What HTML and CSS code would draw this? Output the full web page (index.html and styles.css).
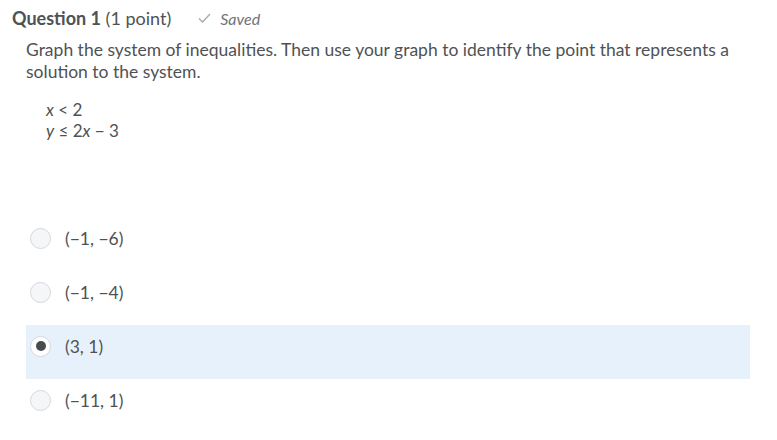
FILE: index.html
```html
<!DOCTYPE html>
<html>
<head>
<meta charset="utf-8">
<link rel="stylesheet" href="styles.css">
</head>
<body>
<div class="header">
  <span class="qtitle"><b>Question 1</b> (1 point)</span>
  <span class="saved">
    <svg class="check" width="13" height="10" viewBox="0 0 13 10"><path d="M1 5.5 L4.5 9 L12 1" fill="none" stroke="#a9aeb2" stroke-width="1.5"/></svg>
    <i>Saved</i>
  </span>
</div>
<div class="content">
  <p class="prompt">Graph the system of inequalities. Then use your graph to identify the point that represents a solution to the system.</p>
  <div class="math">
    <div><i>x</i> &lt; 2</div>
    <div><i>y</i> ≤ 2<i>x</i> − 3</div>
  </div>
  <div class="options">
    <div class="opt"><span class="radio"></span><span class="label">(−1, −6)</span></div>
    <div class="opt"><span class="radio"></span><span class="label">(−1, −4)</span></div>
    <div class="opt selected"><span class="radio on"></span><span class="label">(3, 1)</span></div>
    <div class="opt"><span class="radio"></span><span class="label">(−11, 1)</span></div>
  </div>
</div>
</body>
</html>
```
FILE: styles.css
```css
body {
  margin: 0;
  font-family: Lato, "Noto Sans", sans-serif;
  color: #4f5255;
  background: #fff;
}
.header {
  display: flex;
  align-items: center;
  height: 36px;
  padding-left: 12px;
  font-size: 18px;
}
.qtitle b { font-weight: 700; }
.saved {
  display: flex;
  align-items: center;
  margin-left: 27px;
  font-size: 16px;
  color: #6e7376;
}
.check { margin-right: 9px; }
.content {
  margin-left: 26px;
  width: 724px;
}
.prompt {
  margin: 3px 0 0 0;
  font-size: 17.5px;
  line-height: 22px;
}
.math {
  margin: 16px 0 0 20px;
  font-size: 17px;
  line-height: 21px;
}
.math i { font-style: italic; }
.options {
  margin-top: 76px;
}
.opt {
  display: flex;
  align-items: center;
  height: 54px;
  box-sizing: border-box;
  padding: 0 0 12px 4px;
}
.opt.selected { background: #e7f1fc; }
.radio {
  width: 21px;
  height: 21px;
  box-sizing: border-box;
  border: 1px solid #d4d8dc;
  border-radius: 50%;
  background: #f5f6f7;
  display: flex;
  align-items: center;
  justify-content: center;
}
.radio.on {
  background: #fff;
  border-color: #d4d8dc;
}
.radio.on::after {
  content: "";
  width: 10px;
  height: 10px;
  border-radius: 50%;
  background: #494c4e;
}
.label {
  margin-left: 14px;
  font-size: 17.5px;
}
```
